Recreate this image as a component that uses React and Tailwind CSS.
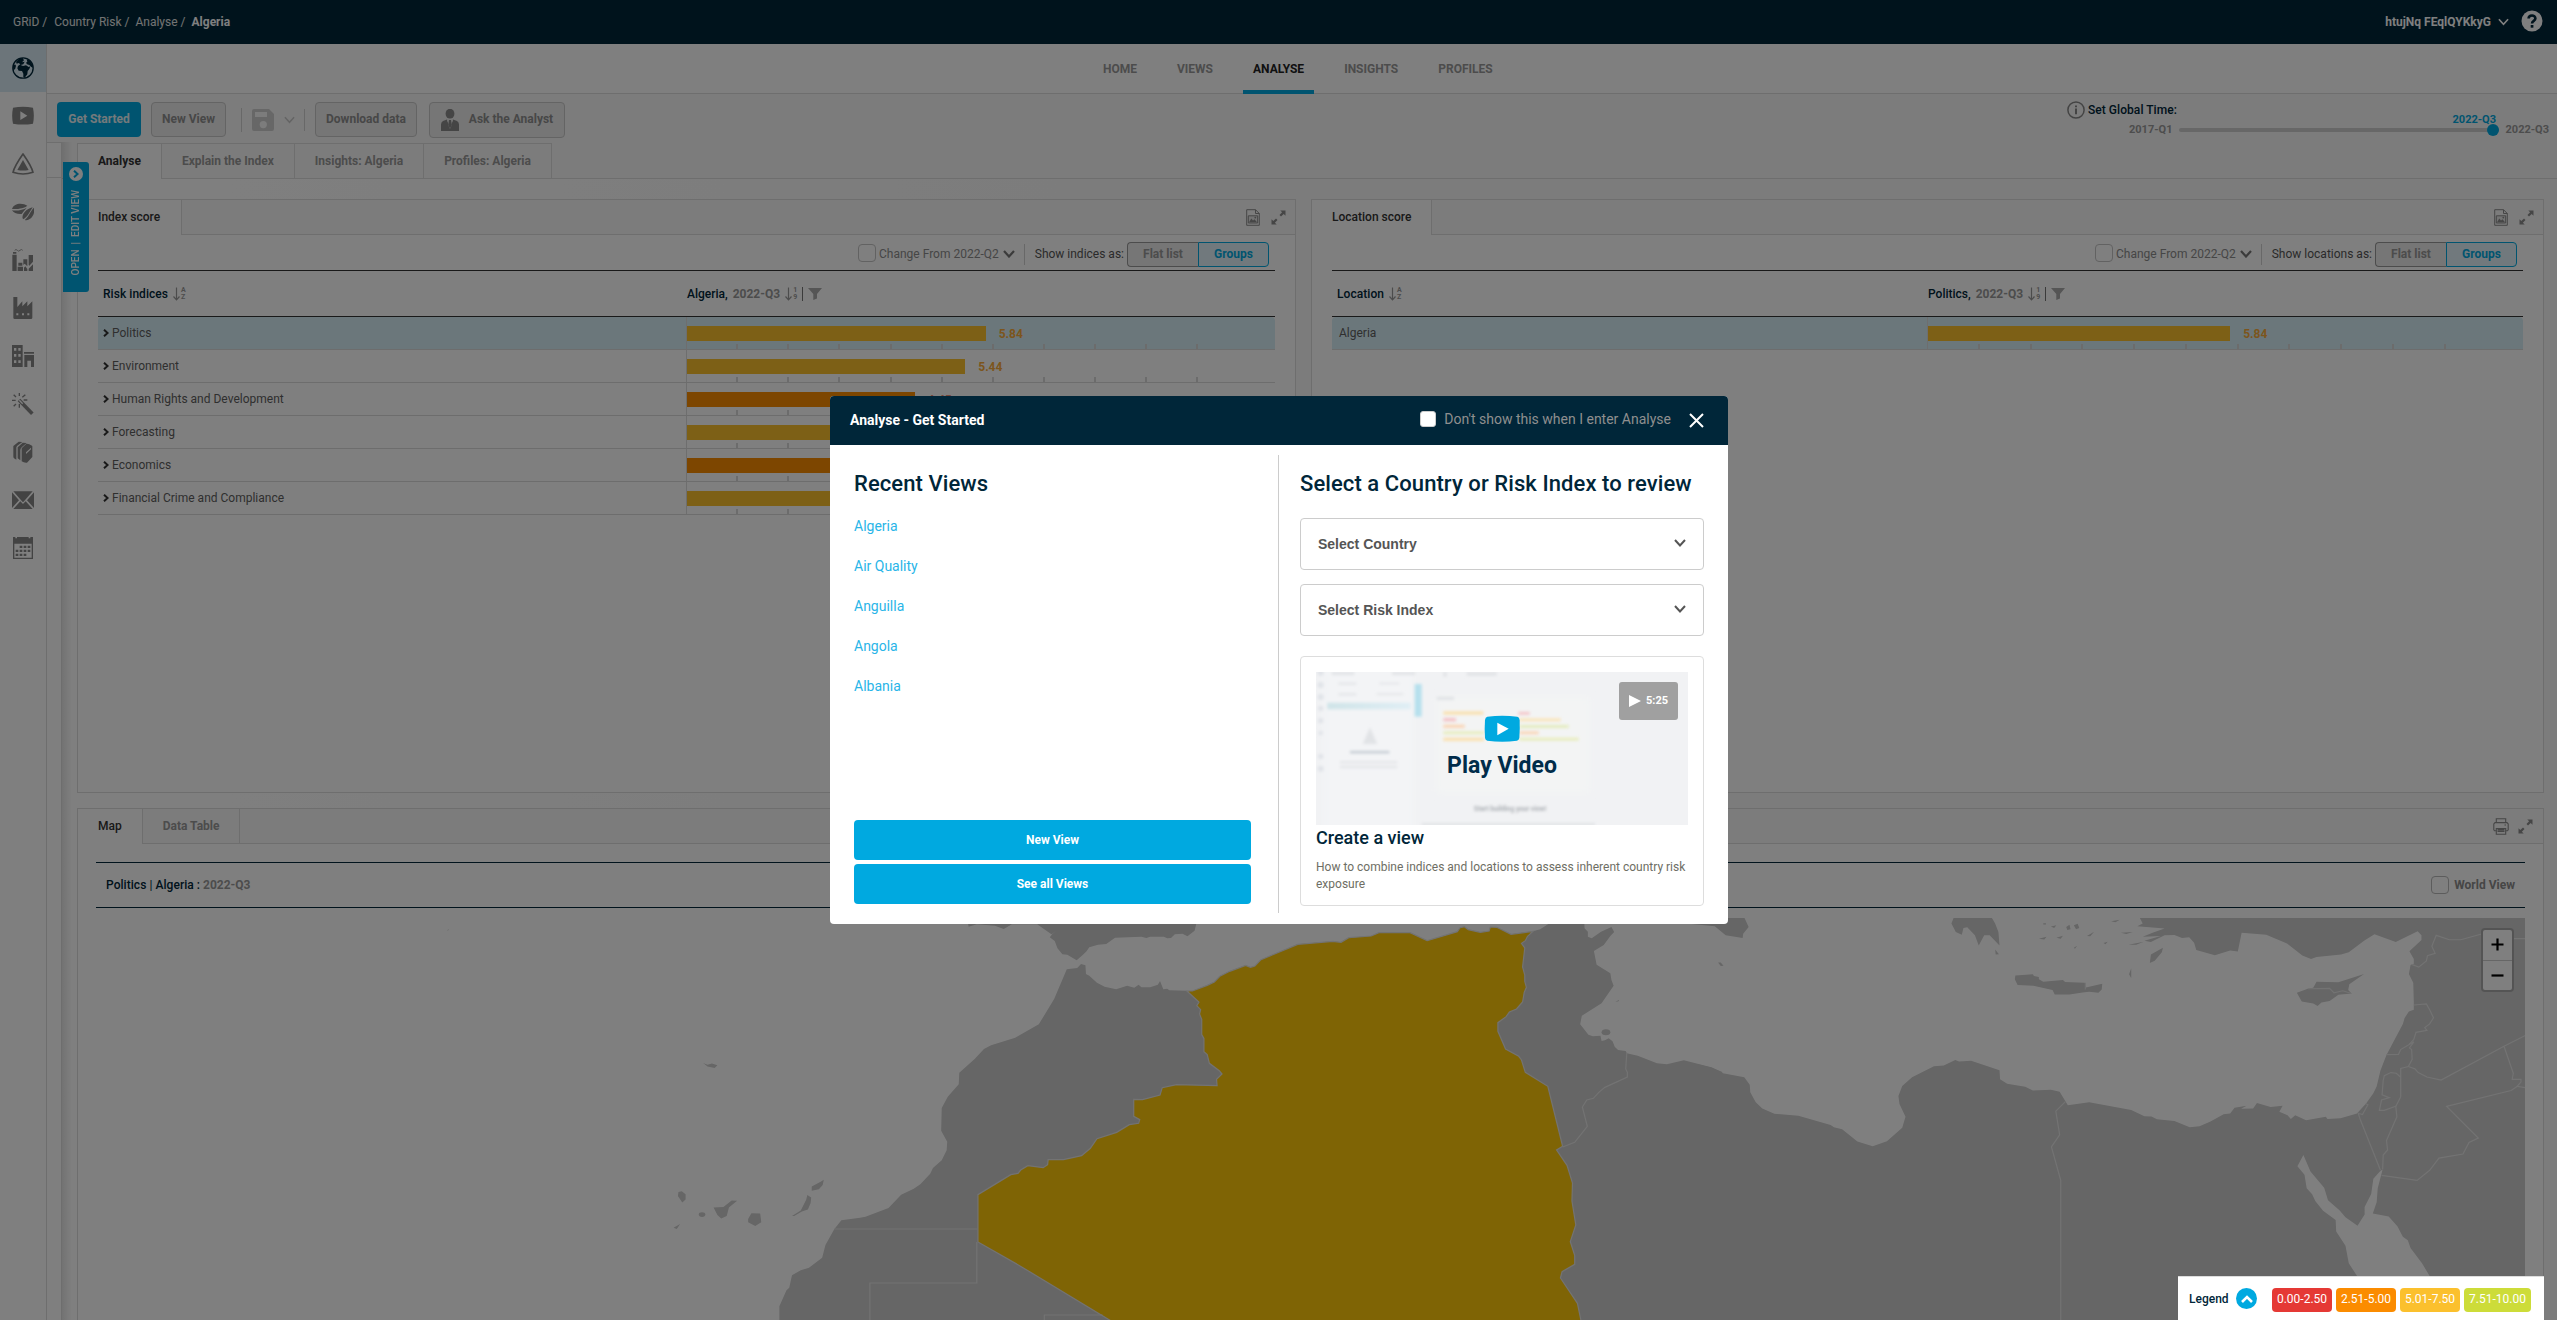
import React from "react";

const SIDE_ICONS = [
  // globe
  <g key="g">
    <circle cx="33" cy="33" r="30.5" fill="none" stroke="currentColor" strokeWidth="4" />
    <path d="M22 5 L32 3 L36 10 L30 16 L38 14 L34 22 L26 24 L33 27 L42 25 L50 30 L55 28 L52 36 L47 42 L46 52 L38 62 L34 60 L34 50 L30 42 L20 41 L16 34 L18 27 L25 22 L20 18 L14 20 L12 14 Z" fill="currentColor" />
    <path d="M44 7 L52 10 L60 20 L63 32 L58 30 L52 24 L45 22 L42 17 L46 14 Z" fill="currentColor" />
    <path d="M3 28 L9 22 L12 26 L10 34 L4 42 Z" fill="currentColor" />
  </g>,
  // video
  <path key="v" d="M3 8 Q33 3 63 8 Q68 33 63 56 Q33 61 3 56 Q-2 33 3 8 Z M25 19 V45 L46 32 Z" fill="currentColor" fillRule="evenodd" />,
  // alert triangle
  <g key="t">
    <path d="M33 3 C40 13 58 38 63 58 C45 64 21 64 3 58 C8 38 26 13 33 3 Z" fill="none" stroke="currentColor" strokeWidth="5" strokeLinejoin="round" />
    <path d="M33 21 L50 51 Q33 54 16 51 Z" fill="currentColor" />
  </g>,
  // beans
  <g key="b" fill="currentColor">
    <path d="M0 24 C6 4 34 6 46 14 C38 21 20 25 0 24 Z" />
    <path d="M0 28 C18 30 34 26 44 20 C40 26 33 32 29 39 C16 40 4 36 0 28 Z" />
    <path d="M33 55 C26 42 44 22 62 19 C52 34 46 50 33 55 Z" />
    <path d="M65 20 C72 38 56 62 38 57 C48 50 54 34 65 20 Z" />
  </g>,
  // industry chart
  <g key="c" fill="currentColor">
    <path d="M8 4 q4 -5 8 0 t8 0 t8 0" fill="none" stroke="currentColor" strokeWidth="2.5" />
    <path d="M3 9 H13 V14 H3 Z M1 17 H14 V66 H1 Z M17 53 H33 V66 H17 Z M19 41 H31 V50 H19 Z M34 31 H46 V52 L38 44 L34 48 Z M50 18 H63 V38 L52 50 L50 48 Z M36 56 L40 52 L46 60 V66 H36 Z M50 59 L63 46 V66 H50 Z" />
  </g>,
  // factory
  <path key="f" fill="currentColor" fillRule="evenodd" d="M4 0 H16 V30 L31 13 V28 L46 13 V28 L61 13 V62 Q61 66 57 66 H8 Q4 66 4 62 Z M13 49 h6 v6 h-6 Z M30 49 h6 v6 h-6 Z M46 49 h6 v6 h-6 Z" />,
  // buildings
  <path key="bl" fill="currentColor" fillRule="evenodd" d="M0 0 H32 V66 H0 Z M6 9 V17 H13 V9 Z M19 9 V17 H26 V9 Z M6 27 V35 H13 V27 Z M19 27 V35 H26 V27 Z M6 46 V54 H13 V46 Z M19 46 V54 H26 V46 Z M36 21 H66 V26 H36 Z M37 30 H66 V66 H57 V47 H46 V66 H37 Z" />,
  // wand
  <g key="w">
    <path d="M21 21 L61 62" stroke="currentColor" strokeWidth="11" />
    <path d="M22 22 L32 32" stroke="#fff" strokeWidth="4" />
    <path d="M22 0 V9 M22 33 V44 M0 22 H11 M35 21 H46 M5 5 L12 12 M40 5 L31 13 M5 40 L12 33" stroke="currentColor" strokeWidth="4" />
  </g>,
  // books
  <g key="bo" fill="currentColor">
    <path d="M4 15 L20 2 L31 3 L16 14 Q12 18 13 22 V56 L6 52 Q4 50 4 46 Z" />
    <path d="M17 19 L32 5 L44 6 L30 18 Q25 22 25 27 V58 L17 52 Z" />
    <path d="M29 22 L43 8 Q50 7 60 14 Q62 16 61 20 V48 L45 65 Q36 66 29 61 Z M42 34 L57 20 V25 L42 39 Z" fillRule="evenodd" />
  </g>,
  // mail
  <g key="m" fill="currentColor">
    <path d="M4 7 H62 L34 39 H32 Z" />
    <path d="M0 10 L21 34 L0 57 Z M66 10 L45 34 L66 57 Z" />
    <path d="M4 60 L25 37 L33 45 L41 37 L62 60 Z" />
  </g>,
  // calendar
  <g key="ca" fill="currentColor">
    <path fillRule="evenodd" d="M3 0 H10 V4 H15 V0 H50 V4 H55 V0 H63 V66 H3 Z M7 20 V62 H59 V20 Z" />
    <path d="M23 26 h8 v7 h-8z M35 26 h8 v7 h-8z M47 26 h8 v7 h-8z M11 38 h8 v7 h-8z M23 38 h8 v7 h-8z M35 38 h8 v7 h-8z M47 38 h8 v7 h-8z M11 50 h8 v7 h-8z M23 50 h8 v7 h-8z M35 50 h8 v7 h-8z" />
  </g>,
];

function Chevron({ className, d = "M1 1 L6 6.5 L11 1", w = 1.8, box = "0 0 12 8" }) {
  return (
    <svg viewBox={box} className={className} fill="none" stroke="currentColor" strokeWidth={w}>
      <path d={d} />
    </svg>
  );
}

function SortIcon({ top, bottom }) {
  return (
    <span className="flex h-[14px] items-center text-[#999]">
      <svg viewBox="0 0 7 14" className="h-[14px] w-[7px]" fill="none" stroke="currentColor" strokeWidth="1.2">
        <path d="M3.5 0.5 V12.5 M0.5 9.5 L3.5 12.8 L6.5 9.5" />
      </svg>
      <span className="ml-px flex flex-col text-[7px] font-bold leading-[7px]">
        <span>{top}</span>
        <span>{bottom}</span>
      </span>
    </span>
  );
}

function ExpandIcon() {
  return (
    <svg viewBox="0 0 15 15" className="h-[15px] w-[15px] text-[#8c8c8c]" fill="currentColor">
      <path d="M9.3 0.5 H14.5 V5.7 L12.7 3.9 L10 6.5 L8.5 5 L11.1 2.3 Z" />
      <path d="M5.7 14.5 H0.5 V9.3 L2.3 11.1 L5 8.5 L6.5 10 L3.9 12.7 Z" />
    </svg>
  );
}

function ImageFileIcon() {
  return (
    <svg viewBox="0 0 14 17" className="h-[17px] w-[14px] text-[#8c8c8c]" fill="none" stroke="currentColor" strokeWidth="1">
      <path d="M0.7 0.7 H9.5 L13.3 4.5 V16.3 H0.7 Z M9.5 0.7 V4.5 H13.3" />
      <path d="M2.3 6.8 H11.7 V14 H2.3 Z" fill="#e6e6e6" />
      <path d="M3 13.3 L5.3 9.5 L7 11.5 L8.5 10.2 L11 13.3 Z" fill="currentColor" stroke="none" />
      <circle cx="9.3" cy="8.6" r="0.9" fill="currentColor" stroke="none" />
    </svg>
  );
}

function PrinterIcon() {
  return (
    <svg viewBox="0 0 16 17" className="h-[17px] w-[16px] text-[#8c8c8c]" fill="none" stroke="currentColor" strokeWidth="1.1">
      <path d="M3.3 4.6 V0.8 H12.7 V4.6" />
      <path d="M3.3 12.8 H1.6 L0.8 11.8 V6 L2 4.6 H14 L15.2 6 V11.8 L14.4 12.8 H12.7" />
      <path d="M3.3 10.5 H12.7 V16.3 H3.3 Z" />
      <path d="M4.5 11.6 H11.5 M4.5 13.2 H11.5" strokeWidth="1.4" />
      <path d="M11.5 7 H13" />
    </svg>
  );
}

const TICKS = [1, 2, 3, 4, 5, 6, 7, 8, 9, 10];

function ScoreCell({ value, unit, color, valueColor }) {
  return (
    <div className="flex flex-1 flex-col border-l border-[#dcdcdc]">
      <div className="flex h-[24px] items-end">
        <span className="h-[15px]" style={{ width: value * unit, background: color }} />
        <span className="-mb-px ml-[13px] font-bold leading-[15px]" style={{ color: valueColor }}>
          {value.toFixed(2)}
        </span>
      </div>
      <div className="flex h-[8px] items-end">
        {TICKS.map((t) => (
          <span key={t} className="h-[5px] shrink-0 border-r-2 border-[#d9d9d9]" style={{ width: unit }} />
        ))}
      </div>
    </div>
  );
}

function Panel({ width, title, showAs, tabWidth, firstCol, nameHead, valueHead, rows, unit, arrows }) {
  return (
    <section className="flex flex-col border border-[#dcdcdc] bg-white" style={{ width }}>
      <div className="flex h-[35px] shrink-0">
        <div className="flex items-center border-r border-[#dcdcdc] bg-white pl-[20px] font-medium text-[#333]" style={{ width: tabWidth }}>
          {title}
        </div>
        <div className="flex flex-1 items-center justify-end gap-[11px] border-b border-[#dcdcdc] bg-[#f8f8f8] pr-[9px] pt-px">
          <ImageFileIcon />
          <ExpandIcon />
        </div>
      </div>
      <div className="flex h-[35px] shrink-0 items-center justify-end pr-[26px] pt-[3px]">
        <span className="mb-[3px] h-[18px] w-[18px] rounded-[4px] border border-[#c4c4c4] bg-white" />
        <span className="ml-[3px] text-[#8c8c8c]">Change From 2022-Q2</span>
        <Chevron className="mb-px ml-[4px] h-[8px] w-[12px] text-[#777]" w={2.2} />
        <span className="ml-[9px] h-[21px] border-l border-[#d0d0d0]" />
        <span className="ml-[10px] text-[#555]">{showAs}</span>
        <div className="ml-[3px] flex h-[25px] w-[142px] font-bold">
          <span className="flex w-[71px] items-center justify-center rounded-l-[4px] border border-r-0 border-[#999] bg-[#ececec] text-[#999]">Flat list</span>
          <span className="flex w-[71px] items-center justify-center rounded-r-[4px] border border-[#00a9e0] bg-[#e3f3fa] text-[#00a9e0]">Groups</span>
        </div>
      </div>
      <div className="mx-[20px] flex flex-col">
        <div className="flex h-[47px] items-center border-y border-[#333] pt-px font-medium text-[#002639]">
          <div className="flex items-center gap-[5px] pl-[5px]" style={{ width: firstCol }}>
            <span className="tracking-[0.05px]">{nameHead}</span> <SortIcon top="A" bottom="Z" />
          </div>
          <div className="flex items-center pl-px">
            {valueHead}
            <span className="ml-[5px] mr-[5px] font-bold text-[#999]">2022-Q3</span>
            <SortIcon top="1" bottom="9" />
            <span className="ml-[5px] h-[14px] border-l border-[#777]" />
            <svg viewBox="0 0 14 12" className="ml-[5px] h-[12px] w-[14px] text-[#aaa]" fill="currentColor">
              <path d="M0 0 H14 L9 6 V10.5 L5.3 12 V6 Z" />
            </svg>
          </div>
        </div>
        {rows.map((r, i) => (
          <div key={r.name} className={`flex h-[33px] border-b border-[#dadada] text-[#5e5e5e] ${i === 0 ? "rounded-t-[4px] bg-[#d7eff7]" : ""}`}>
            <div className={`flex items-center ${arrows ? "pl-[5px]" : "pl-[7px]"}`} style={{ width: firstCol }}>
              {arrows && <Chevron className="mr-[3px] h-[8px] w-[6px] text-[#333]" box="0 0 6 8" d="M1 0.7 L4.6 4 L1 7.3" w={2} />}
              {r.name}
            </div>
            <ScoreCell value={r.value} unit={unit} color={r.color} valueColor={r.valueColor} />
          </div>
        ))}
      </div>
    </section>
  );
}

const Y = "#fbc02d";
const O = "#fb8c00";
const YT = "#f8ab3a";
const INDICES = [
  { name: "Politics", value: 5.84, color: Y, valueColor: YT },
  { name: "Environment", value: 5.44, color: Y, valueColor: YT },
  { name: "Human Rights and Development", value: 4.45, color: O, valueColor: "#f08a70" },
  { name: "Forecasting", value: 5.2, color: Y, valueColor: YT },
  { name: "Economics", value: 3.9, color: O, valueColor: O },
  { name: "Financial Crime and Compliance", value: 5.1, color: Y, valueColor: YT },
];

function RegionMap() {
  return (
    <svg viewBox="96 918 2429 402" className="ml-[18px] mt-[10px] h-[402px] w-[2429px] shrink-0">
      {/* western Mediterranean and north-west Africa */}
      <g transform="translate(860 900) scale(0.5485 0.33333)">
        <path fill="#ccc" d="M195 50 L198 80 213 73 246 77 262 87 277 73 323 73 349 103 358 92 351 101 346 112 355 123 360 145 369 163 378 164 395 181 406 165 413 154 418 142 434 134 449 132 465 113 513 110 522 114 529 110 554 110 560 115 567 114 574 103 588 101 597 109 610 92 613 72 613 50Z" />
        <path fill="#ccc" d="M403 192 L411 196 412 222 418 227 432 248 446 260 467 268 487 257 500 263 508 254 513 262 529 262 543 254 547 243 553 268 560 266 564 271 596 272 606 273 700 300 1100 300 1227 94 1240 88 1255 72 1255 50 1320 50 1321 85 1327 95 1327 110 1334 115 1351 95 1370 81 1375 96 1368 108 1356 135 1338 153 1343 194 1368 220 1370 240 1374 257 1352 310 1316 347 1313 373 1328 404 1336 409 1350 407 1352 423 1358 421 1365 415 1372 424 1376 440 1382 450 1396 453 1398 460 1418 467 1453 490 1471 493 1502 481 1552 502 1572 516 1572 1262 -147 1262 -147 1219 -134 1171 -129 1163 -124 1126 -108 1111 -93 1103 -69 1073 -63 1035 -47 988 -34 961 0 953 10 950 52 924 75 884 98 866 110 853 128 821 133 804 149 781 158 751 159 725 148 692 149 624 160 590 180 553 181 518 209 477 226 447 239 436 283 413 326 373 354 297 377 208 396 204Z" />
        <path fill="#ffc90b" stroke="#e6e6e6" strokeWidth="1.2" vectorEffect="non-scaling-stroke" d="M596 273 L606 273 633 256 646 246 656 229 674 214 703 196 712 202 720 198 731 179 798 133 862 124 877 127 891 113 932 108 946 98 1003 98 1034 122 1089 95 1094 83 1102 80 1109 89 1131 97 1147 93 1149 81 1161 82 1187 103 1227 94 1217 109 1213 122 1206 130 1212 144 1208 201 1212 225 1212 244 1215 262 1211 277 1208 306 1197 327 1184 336 1178 350 1163 368 1163 394 1177 447 1201 469 1206 480 1213 517 1254 559 1281 739 1270 750 1289 796 1299 849 1298 903 1305 975 1295 1025 1303 1066 1303 1093 1280 1115 1277 1134 1308 1210 1318 1290 485 1290 294 1100 215 1026 215 884 275 824 288 820 293 810 306 797 334 803 342 794 343 779 371 779 404 767 420 745 432 716 468 697 491 674 508 670 510 659 499 649 499 598 515 599 547 585 551 563 577 554 651 557 650 538 660 522 655 512 637 490 633 464 627 455 627 415 623 404 623 358 619 342 621 329 614 317 618 306Z" />
        <g fill="none" stroke="#e6e6e6" strokeWidth="1.2">
          <path vectorEffect="non-scaling-stroke" d="M-47 987 H214 M213 1026 V1149 H18 V1262 M336 1262 V1245 H442" />
          <path vectorEffect="non-scaling-stroke" d="M1398 458 L1396 507 1399 517 1399 531 1358 562 1347 577 1337 595 1325 600 1317 621 1326 679 1303 727 1281 741" />
        </g>
        <ellipse cx="1360" cy="397" rx="8" ry="9" fill="#ccc" />
        <path fill="#ccc" d="M1377 306 L1384 299 1383 304Z" />
      </g>
      {/* eastern Mediterranean */}
      <g transform="translate(1700 790) scale(0.54656 0.33801)">
        <path fill="#ccc" d="M0 813 L22 822 42 838 81 850 91 872 92 894 102 924 114 942 136 958 180 964 239 991 245 998 260 1004 288 1040 316 1054 342 1039 370 999 376 967 365 929 363 905 370 876 388 850 428 817 446 815 467 799 474 803 496 801 548 829 549 856 562 869 595 878 609 889 642 887 658 893 673 933 712 924 789 947 813 965 826 966 836 974 868 979 896 998 914 995 934 981 958 959 970 957 978 940 1000 934 990 943 1012 942 1019 926 1044 938 1066 934 1060 952 1075 962 1081 973 1089 962 1109 977 1145 967 1148 973 1172 971 1202 957 1219 927 1232 897 1238 877 1245 830 1256 784 1286 692 1289 675 1297 655 1306 650 1306 628 1305 570 1297 544 1300 518 1306 514 1306 500 1298 477 1320 444 1320 430 1313 418 1273 450 1234 427 1215 446 1187 480 1173 487 1128 494 1118 500 1102 490 1074 454 1036 428 991 422 984 478 970 475 942 489 908 473 904 452 895 436 882 438 868 429 850 430 825 450 813 446 843 432 810 434 828 422 850 410 800 403 810 395 802 370 1520 370 1520 1575 -10 1575 -10 810Z" />
        <path fill="#fff" d="M1104 1080 L1093 1113 1106 1138 1110 1178 1120 1196 1126 1217 1140 1245 1163 1272 1164 1306 1181 1348 1187 1400 1203 1440 1203 1575 1380 1575 1335 1438 1321 1400 1300 1355 1295 1332 1286 1322 1276 1291 1260 1262 1231 1253 1238 1220 1240 1178 1249 1122 1243 1130 1232 1150 1228 1195 1216 1234 1216 1256 1203 1289 1181 1264 1170 1243 1149 1214 1142 1177 1117 1129Z" />
        <g fill="#ccc">
          <path d="M-30 370 L-20 396 27 403 47 430 78 438 79 425 89 405 79 370Z" />
          <path d="M33 510 L38 510 43 520 38 521Z" />
          <path d="M466 370 L460 395 468 420 479 428 482 408 489 406 503 430 510 460 520 430 530 430 548 460 546 420 540 395 531 370Z" />
          <path d="M540 472 L547 486 541 487Z" />
          <path d="M577 549 L590 547 609 545 611 550 620 553 620 560 628 567 664 562 668 568 704 570 706 584 736 573 735 590 729 600 712 597 700 599 676 605 649 605 645 592 610 579 581 577 576 560Z" />
          <path d="M847 467 L825 487 823 512 832 505 845 480Z M789 527 L785 545 789 557Z" />
          <path d="M670 405 L676 399 678 412 672 414Z M684 400 L691 396 694 408 688 412Z M620 440 L634 434 630 442Z M652 437 L664 431 660 440Z M708 432 L721 419 714 433Z M684 467 L690 461 686 470Z M738 453 L746 449 742 456Z M770 422 L792 420 780 426Z M752 388 L768 384 760 391Z M784 458 L812 449 798 458Z M642 404 L652 400 648 408Z M628 394 h5 v4 h-5z" />
          <path d="M1092 600 L1112 588 1122 585 1128 567 1168 569 1215 544 1188 575 1186 592 1192 602 1168 606 1152 624 1137 629 1130 639 1122 632 1101 626Z" />
        </g>
        <g fill="none" stroke="#e6e6e6" strokeWidth="1.2">
          <path vectorEffect="non-scaling-stroke" d="M669 921 L651 950 658 1020 643 1056 660 1155 660 1575" />
          <path vectorEffect="non-scaling-stroke" d="M1112 588 L1152 587 1160 600 1176 594 1192 602 M705 570 V590" />
          <path vectorEffect="non-scaling-stroke" d="M1204 955 L1208 975 1245 1125 M1206 957 L1212 960 1222 931 1218 928" />
          <path vectorEffect="non-scaling-stroke" d="M1249 1122 L1250 1080 1258 1065 1256 1037 1275 967 1273 936 1282 908 1282 824 1296 818 1303 797 1302 768 1298 763 1306 745 1282 768 1278 782 1256 783" />
          <path vectorEffect="non-scaling-stroke" d="M1282 850 L1274 838 1264 836 1252 845 1250 860 1248 902 1261 910 1247 917 1243 948 1252 948 1274 935" />
          <path vectorEffect="non-scaling-stroke" d="M1306 636 L1329 633 1335 650 1342 674 1335 692 1326 703 1330 711 1310 717 1306 738 1298 752" />
          <path vectorEffect="non-scaling-stroke" d="M1302 516 L1315 524 1329 506 1331 490 1345 483 1339 462 1347 430 1371 443 1392 443 1430 426 M1488 440 H1515" />
          <path vectorEffect="non-scaling-stroke" d="M1296 818 L1308 825 1314 836 1330 849 1356 858 1471 758 1515 722 M1471 758 L1488 838 1486 856 1502 856 1502 864 1495 877 1515 882" />
          <path vectorEffect="non-scaling-stroke" d="M1495 877 L1484 889 1366 936 1424 1030 1407 1043 1396 1077 1352 1089 1335 1125 1312 1155 1247 1140" />
        </g>
      </g>
      {/* Atlantic islands */}
      <g transform="translate(0 780) scale(0.54847 0.34439)" fill="#ccc">
        <path d="M1237 1196 L1243 1194 1250 1203 1250 1218 1244 1227 1236 1208Z M1228 1300 L1240 1289 1234 1304Z" />
        <ellipse cx="1280" cy="1262" rx="6" ry="7" />
        <path d="M1301 1241 L1319 1240 1334 1221 1344 1222 1329 1241 1325 1266 1315 1273 1308 1263Z" />
        <path d="M1370 1258 L1386 1259 1388 1284 1377 1295 1364 1284 1364 1275Z" />
        <path d="M1444 1266 L1460 1250 1470 1218 1472 1205 1479 1212 1478 1228 1473 1247 1462 1253 1448 1266Z" />
        <path d="M1480 1193 L1480 1180 1497 1166 1502 1161 1500 1176 1493 1188Z" />
        <path d="M1282 822 L1290 827 1298 823 1308 828 1303 836 1290 832Z M815 436 L819 433 817 437Z" />
      </g>
    </svg>
  );
}

function Thumbnail() {
  return (
    <svg viewBox="78 96 1116 459" className="h-full w-full">
      <defs>
        <filter id="soft" x="-20%" y="-100%" width="140%" height="300%">
          <feGaussianBlur stdDeviation="4" />
        </filter>
        <filter id="softer" x="-20%" y="-20%" width="140%" height="140%">
          <feGaussianBlur stdDeviation="10" />
        </filter>
        <linearGradient id="fade" x1="0" x2="1">
          <stop offset="0" stopColor="#cfe4e8" />
          <stop offset="1" stopColor="#e0eef5" />
        </linearGradient>
      </defs>
      <rect x="78" y="96" width="1116" height="459" fill="#f1f2f4" />
      <g filter="url(#softer)">
        <rect x="100" y="60" width="270" height="530" fill="#f3f4f6" />
        <rect x="440" y="170" width="460" height="290" fill="#f3f4f4" />
      </g>
      <g filter="url(#soft)">
        <g fill="#e0e3e8">
          <circle cx="92" cy="98" r="9" /><circle cx="92" cy="135" r="9" /><circle cx="92" cy="171" r="9" />
          <circle cx="92" cy="205" r="8" /><circle cx="92" cy="242" r="8" /><circle cx="92" cy="279" r="7" />
          <circle cx="92" cy="349" r="8" /><circle cx="92" cy="386" r="9" />
        </g>
        <g fill="#e1e3e6">
          <rect x="125" y="96" width="68" height="9" /><rect x="306" y="96" width="70" height="9" />
          <rect x="530" y="96" width="90" height="11" /><rect x="460" y="96" width="10" height="14" />
          <rect x="145" y="128" width="54" height="6" /><rect x="268" y="128" width="60" height="5" />
          <rect x="145" y="160" width="54" height="6" /><rect x="260" y="160" width="80" height="5" />
          <rect x="440" y="170" width="52" height="10" />
          <rect x="150" y="364" width="172" height="6" /><rect x="150" y="378" width="172" height="6" />
          <path d="M240 262 L262 312 H218 Z" />
          <rect x="395" y="549" width="520" height="8" />
        </g>
        <rect x="180" y="333" width="118" height="7" fill="#c3cad2" />
        <rect x="112" y="188" width="250" height="20" fill="url(#fade)" />
        <rect x="374" y="132" width="21" height="98" fill="#b6e0ed" />
      </g>
      <g filter="url(#soft)" opacity="0.9">
        <rect x="460" y="214" width="120" height="10" fill="#fbdfa8" />
        <rect x="460" y="234" width="38" height="10" fill="#f5bcc0" />
        <rect x="460" y="254" width="64" height="10" fill="#fbd3b0" />
        <rect x="460" y="274" width="122" height="9" fill="#e7edb8" />
        <rect x="460" y="293" width="122" height="10" fill="#fbdfa8" />
        <rect x="685" y="216" width="34" height="8" fill="#f5bcc0" />
        <rect x="688" y="235" width="124" height="9" fill="#fbe3b4" />
        <rect x="688" y="255" width="148" height="9" fill="#e2ebb8" />
        <rect x="688" y="274" width="58" height="9" fill="#fbd3b0" />
        <rect x="688" y="293" width="178" height="9" fill="#e7edb8" />
      </g>
      <text x="660" y="514" textAnchor="middle" fontFamily="Roboto, sans-serif" fontSize="20" fontWeight="700" fill="#a9adb2" filter="url(#soft)">
        Start building your view!
      </text>
      <path d="M592 230 Q637 225 682 230 Q688 231 689 240 Q690 267 688 294 Q687 301 681 302 Q637 308 592 302 Q586 301 585 294 Q583 267 585 240 Q586 231 592 230 Z" fill="#00a9e0" />
      <path d="M622 248 L656 266 L622 286 Z" fill="#fff" />
    </svg>
  );
}

function SelectBox({ label, className }) {
  return (
    <div className={`flex h-[52px] w-[404px] shrink-0 items-center justify-between rounded-[4px] border border-[#ccc] bg-white pl-[17px] pr-[17px] font-['Liberation_Sans',sans-serif] text-[14px] font-bold text-[#555] ${className}`}>
      {label}
      <Chevron className="mb-[3px] h-[8px] w-[12px] text-[#555]" w={2} />
    </div>
  );
}

function Modal() {
  return (
    <div className="flex h-[528px] w-[898px] flex-col overflow-hidden rounded-[4px] bg-white">
      <div className="flex h-[49px] shrink-0 items-center bg-[#002639] pl-[20px] pr-[24px]">
        <span className="flex-1 text-[14px] font-bold text-white">Analyse - Get Started</span>
        <span className="mb-[3px] h-[16px] w-[16px] rounded-[3px] border border-[#ccc] bg-white" />
        <span className="mb-[2px] ml-[8px] text-[14px] text-[#8f8f8f]">Don't show this when I enter Analyse</span>
        <svg viewBox="0 0 15 15" className="mb-px ml-[18px] h-[15px] w-[15px] text-white" fill="none" stroke="currentColor" strokeWidth="2">
          <path d="M1 1 L14 14 M14 1 L1 14" />
        </svg>
      </div>
      <div className="flex flex-1">
        <div className="flex w-[448px] flex-col pb-[20px] pl-[24px] pt-[26px]">
          <h2 className="text-[22px] font-medium leading-[26px] tracking-[0.08px] text-[#002639]">Recent Views</h2>
          <div className="mt-[9px] flex flex-col text-[14px] leading-[40px] text-[#29b5e8]">
            <a>Algeria</a>
            <a>Air Quality</a>
            <a>Anguilla</a>
            <a>Angola</a>
            <a>Albania</a>
          </div>
          <div className="mt-auto flex w-[397px] flex-col gap-[4px] font-bold text-white">
            <button className="h-[40px] rounded-[4px] bg-[#00a9e0]">New View</button>
            <button className="h-[40px] rounded-[4px] bg-[#00a9e0]">See all Views</button>
          </div>
        </div>
        <div className="mb-[11px] mt-[10px] border-l border-[#ccc]" />
        <div className="flex flex-col pl-[21px] pt-[26px]">
          <h2 className="text-[22px] font-medium leading-[26px] tracking-[0.08px] text-[#002639]">Select a Country or Risk Index to review</h2>
          <SelectBox label="Select Country" className="mt-[21px]" />
          <SelectBox label="Select Risk Index" className="mt-[14px]" />
          <div className="mt-[20px] flex h-[250px] w-[404px] flex-col rounded-[4px] border border-[#ddd] px-[15px] pt-[15px]">
            <div className="relative h-[153px] w-[372px] shrink-0">
              <Thumbnail />
              <span className="absolute left-0 right-0 top-[80px] text-center text-[23px] font-bold leading-[27px] text-[#002c4a]">Play Video</span>
              <span className="absolute right-[10px] top-[10px] flex h-[38px] w-[59px] items-center rounded-[3px] bg-[#a0a0a0] pb-px pl-[10px] text-[11px] font-bold text-white">
                <svg viewBox="0 0 12 12" className="mr-[5px] h-[12px] w-[12px]" fill="currentColor">
                  <path d="M0 0 L12 6 L0 12 Z" />
                </svg>
                5:25
              </span>
            </div>
            <h3 className="mt-[2px] text-[18px] font-medium leading-[21px] text-[#002639]">Create a view</h3>
            <p className="mt-[11px] leading-[17px] text-[#6e6e64]">How to combine indices and locations to assess inherent country risk exposure</p>
          </div>
        </div>
      </div>
    </div>
  );
}

function Legend() {
  return (
    <div className="absolute bottom-0 right-[13px] flex h-[44px] w-[366px] items-center border-t border-[#ddd] bg-white pl-[11px] pt-[2px]">
      <span className="w-[47px] font-medium text-[#002639]">Legend</span>
      <span className="mb-[2px] flex h-[21px] w-[21px] items-center justify-center rounded-full bg-[#00a9e0] text-white">
        <Chevron className="h-[8px] w-[12px]" d="M1 7 L6 2 L11 7" w={2.6} />
      </span>
      <div className="ml-[15px] flex gap-[4px] text-white">
        <span className="flex h-[24px] w-[60px] items-center justify-center rounded-[4px] bg-[#e53935]">0.00-2.50</span>
        <span className="flex h-[24px] w-[60px] items-center justify-center rounded-[4px] bg-[#fb8c00]">2.51-5.00</span>
        <span className="flex h-[24px] w-[60px] items-center justify-center rounded-[4px] bg-[#fbc02d]">5.01-7.50</span>
        <span className="flex h-[24px] w-[67px] items-center justify-center rounded-[4px] bg-[#cddc39]">7.51-10.00</span>
      </div>
    </div>
  );
}

function Toolbar() {
  const btn = "flex items-center justify-center rounded-[4px] border border-[#c8c8c8] bg-[#ececec] font-bold text-[#8f8f8f]";
  return (
    <div className="flex h-[48px] shrink-0 items-start bg-[#f8f8f8] pl-[10px] pt-[8px]">
      <button className="h-[35px] w-[84px] rounded-[4px] bg-[#00a9e0] font-bold text-[#e8f4f8]">Get Started</button>
      <button className={`ml-[10px] h-[35px] w-[75px] ${btn}`}>New View</button>
      <span className="ml-[15px] mt-[6px] h-[24px] border-l border-[#d0d0d0]" />
      <svg viewBox="0 0 22 22" className="ml-[10px] mt-[7px] h-[22px] w-[22px] text-[#cfcfcf]">
        <path fill="currentColor" fillRule="evenodd" d="M2 0 H17 L22 5 V20 Q22 22 20 22 H2 Q0 22 0 20 V2 Q0 0 2 0 Z M3 3 V8 H15 V3 Z M11.3 12 A3.6 3.6 0 1 0 11.3 19.2 A3.6 3.6 0 1 0 11.3 12 Z" />
      </svg>
      <Chevron className="ml-[10px] mt-[14px] h-[8px] w-[11px] text-[#c8c8c8]" w={1.6} />
      <span className="ml-[9px] mt-[7px] h-[22px] border-l border-[#d0d0d0]" />
      <button className={`ml-[10px] h-[35px] w-[102px] ${btn}`}>Download data</button>
      <button className={`ml-[12px] h-[36px] w-[136px] gap-[10px] pb-px ${btn}`}>
        <svg viewBox="0 0 18 22" className="mt-px h-[22px] w-[18px] text-[#8a8a8a]" fill="currentColor">
          <ellipse cx="9" cy="4.7" rx="4.4" ry="4.9" />
          <path d="M6 10.5 L9 20 L12 10.5 L16 12 Q18 13 18 15.5 V22 H0 V15.5 Q0 13 2 12 Z" />
          <path d="M6 10.7 L9 20 L7.2 16 L8 11.5 Z M12 10.7 L9 20 L10.8 16 L10 11.5 Z" fill="#ececec" />
          <path d="M8 11 H10 L10.8 16 L9 19.5 L7.2 16 Z" />
        </svg>
        Ask the Analyst
      </button>
      <div className="ml-auto mr-[8px] mt-[-1px] flex w-[482px] flex-col">
        <div className="flex h-[18px] items-center">
          <svg viewBox="0 0 18 18" className="h-[18px] w-[18px] text-[#888]" fill="none" stroke="currentColor" strokeWidth="1.5">
            <circle cx="9" cy="9" r="8.1" />
            <path d="M9 7.6 V13.2 M9 4.6 V6.3" strokeWidth="2" />
          </svg>
          <span className="ml-[3px] font-medium tracking-[0.05px] text-[#002639]">Set Global Time:</span>
          <span className="ml-auto mr-[53px] mt-[18px] text-[11px] font-bold text-[#00a9e0]">2022-Q3</span>
        </div>
        <div className="flex h-[20px] items-center text-[11px] font-bold text-[#9a9a9a]">
          <span className="ml-[62px]">2017-Q1</span>
          <span className="relative ml-[7px] mt-[2px] flex h-[4px] flex-1 rounded-full bg-[#cfcfcf]">
            <span className="absolute -top-[4px] right-0 h-[12px] w-[12px] rounded-full bg-[#00a9e0]" />
          </span>
          <span className="ml-[7px]">2022-Q3</span>
        </div>
      </div>
    </div>
  );
}

function MapPanel() {
  return (
    <section className="mt-[15px] flex h-[520px] w-[2467px] shrink-0 flex-col border border-[#dcdcdc] bg-white">
      <div className="flex h-[35px] shrink-0 font-medium">
        <div className="flex items-center border-r border-[#dcdcdc] px-[20px] text-[#333]">Map</div>
        <div className="flex w-[97px] items-center border-b border-r border-[#dcdcdc] bg-[#f8f8f8] px-[20px] font-bold text-[#999]">
          <span className="whitespace-nowrap">Data Table</span>
        </div>
        <div className="flex flex-1 items-center justify-end gap-[9px] border-b border-[#dcdcdc] bg-[#f8f8f8] pr-[10px]">
          <PrinterIcon />
          <ExpandIcon />
        </div>
      </div>
      <div className="mx-[18px] mt-[18px] flex h-[46px] shrink-0 items-center border-y border-[#002639] pl-[10px] pr-[10px] font-medium text-[#002639]">
        <span className="tracking-[0.05px]">Politics <span className="font-normal">|</span> Algeria :</span>
        <span className="ml-[3px] font-bold text-[#999]">2022-Q3</span>
        <span className="ml-auto h-[18px] w-[18px] rounded-[4px] border border-[#b8b8b8]" />
        <span className="ml-[5px] font-bold text-[#8c8c8c]">World View</span>
      </div>
      <div className="relative">
        <RegionMap />
        <div className="absolute right-[29px] top-[20px] flex h-[64px] w-[33px] flex-col rounded-[4px] border-2 border-[#a8a8a8] bg-white text-black">
          <span className="flex flex-1 items-center justify-center border-b border-[#ccc]">
            <svg viewBox="0 0 13 13" className="h-[13px] w-[13px]" stroke="currentColor" strokeWidth="2.2"><path d="M6.5 0.5 V12.5 M0.5 6.5 H12.5" /></svg>
          </span>
          <span className="flex flex-1 items-center justify-center">
            <svg viewBox="0 0 13 13" className="h-[13px] w-[13px]" stroke="currentColor" strokeWidth="2.2"><path d="M0.5 6.5 H12.5" /></svg>
          </span>
        </div>
      </div>
    </section>
  );
}

export default function App() {
  return (
    <div className="relative flex h-[1320px] w-[2557px] flex-col overflow-hidden bg-white font-['Roboto',sans-serif] text-[12px] leading-[15px]">
      <header className="flex h-[44px] shrink-0 items-center bg-[#002639] pl-[13px] pr-[14px] text-[#e6e6e6]">
        <span>GRiD /</span>
        <span className="ml-[7px]">Country Risk /</span>
        <span className="ml-[6px]">Analyse /</span>
        <span className="ml-[6px] font-bold text-white">Algeria</span>
        <span className="ml-auto font-bold text-white">htujNq FEqlQYKkyG</span>
        <Chevron className="ml-[7px] h-[8px] w-[11px] text-white" />
        <svg viewBox="0 0 22 22" className="mb-[2px] ml-[12px] h-[22px] w-[22px]">
          <circle cx="11" cy="11" r="10.5" fill="#fff" />
          <path d="M7.6 8.6 C7.6 4.4 14.4 4.4 14.4 8.5 C14.4 10.9 11 10.8 11 13.4" fill="none" stroke="#002639" strokeWidth="2.6" />
          <rect x="9.7" y="15" width="2.7" height="2.7" fill="#002639" />
        </svg>
      </header>
      <div className="flex min-h-0 flex-1">
        <aside className="flex w-[47px] shrink-0 flex-col border-r border-[#dcdcdc] bg-white">
          {SIDE_ICONS.map((icon, i) => (
            <div key={i} className={`flex h-[48px] items-center pl-[12px] ${i === 0 ? "bg-[#d9ebf5] text-[#002639]" : "text-[#878787]"}`}>
              <svg viewBox="0 0 66 66" className="h-[22px] w-[22px]">{icon}</svg>
            </div>
          ))}
        </aside>
        <div className="flex min-w-0 flex-1 flex-col">
          <nav className="flex h-[50px] shrink-0 border-b border-[#dcdcdc] bg-white pl-[1036px] font-bold text-[#999]">
            {["HOME", "VIEWS", "ANALYSE", "INSIGHTS", "PROFILES"].map((n) => (
              <span key={n} className={`mx-[10px] -mb-px flex items-center px-[10px] ${n === "ANALYSE" ? "border-b-4 border-[#00a9e0] pt-[4px] text-[#222]" : ""}`}>
                {n}
              </span>
            ))}
          </nav>
          <Toolbar />
          <div className="flex min-h-0 flex-1">
            <div className="w-[15px] shrink-0 border-r border-t border-[#dcdcdc] bg-white">
              <div className="h-[35px] border-b border-[#dcdcdc]" />
            </div>
            <main className="relative flex min-w-0 flex-1 flex-col bg-gradient-to-r from-white via-[#f9f9f9] via-40% to-[#f9f9f9]">
              <div className="flex h-[37px] shrink-0 bg-[#f8f8f8] pt-px font-bold text-[#999]">
                <span className="w-[15px] border-b border-[#dcdcdc]" />
                <span className="flex items-center border-l border-r border-t border-[#dcdcdc] bg-white px-[20px] text-[#333]">Analyse</span>
                <span className="flex items-center border-b border-r border-t border-[#dcdcdc] px-[20px]">Explain the Index</span>
                <span className="flex items-center border-b border-r border-t border-[#dcdcdc] px-[20px]">Insights: Algeria</span>
                <span className="flex items-center border-b border-r border-t border-[#dcdcdc] px-[20px]">Profiles: Algeria</span>
                <span className="flex-1 border-b border-[#dcdcdc]" />
              </div>
              <div className="flex min-h-0 flex-1 flex-col pl-[15px] pt-[20px]">
                <div className="flex h-[594px] shrink-0 gap-[15px]">
                  <Panel width={1219} title="Index score" showAs="Show indices as:" tabWidth={104} firstCol={588} nameHead="Risk indices" valueHead="Algeria," rows={INDICES} unit={51.15} arrows />
                  <Panel width={1233} title="Location score" showAs="Show locations as:" tabWidth={120} firstCol={595} nameHead="Location" valueHead="Politics," rows={[{ name: "Algeria", value: 5.84, color: Y, valueColor: YT }]} unit={51.75} />
                </div>
                <MapPanel />
              </div>
              <div className="absolute inset-y-0 left-0 w-[10px] bg-gradient-to-r from-black/10 to-transparent" />
              <div className="absolute left-px top-[20px] flex h-[130px] w-[26px] flex-col items-center rounded-r-[3px] bg-[#00a9e0] pt-[5px]">
                <span className="flex h-[14px] w-[14px] items-center justify-center rounded-full bg-white text-[#00a9e0]">
                  <Chevron className="h-[8px] w-[6px]" box="0 0 6 8" d="M1 0.7 L4.6 4 L1 7.3" w={2} />
                </span>
                <span className="mt-[9px] whitespace-pre text-[10px] font-medium leading-[14px] text-white [writing-mode:vertical-rl] rotate-180">{"OPEN  |  EDIT VIEW"}</span>
              </div>
            </main>
          </div>
        </div>
      </div>
      <div className="absolute inset-0 flex items-center justify-center bg-black/50 pl-px">
        <Modal />
      </div>
      <Legend />
    </div>
  );
}
